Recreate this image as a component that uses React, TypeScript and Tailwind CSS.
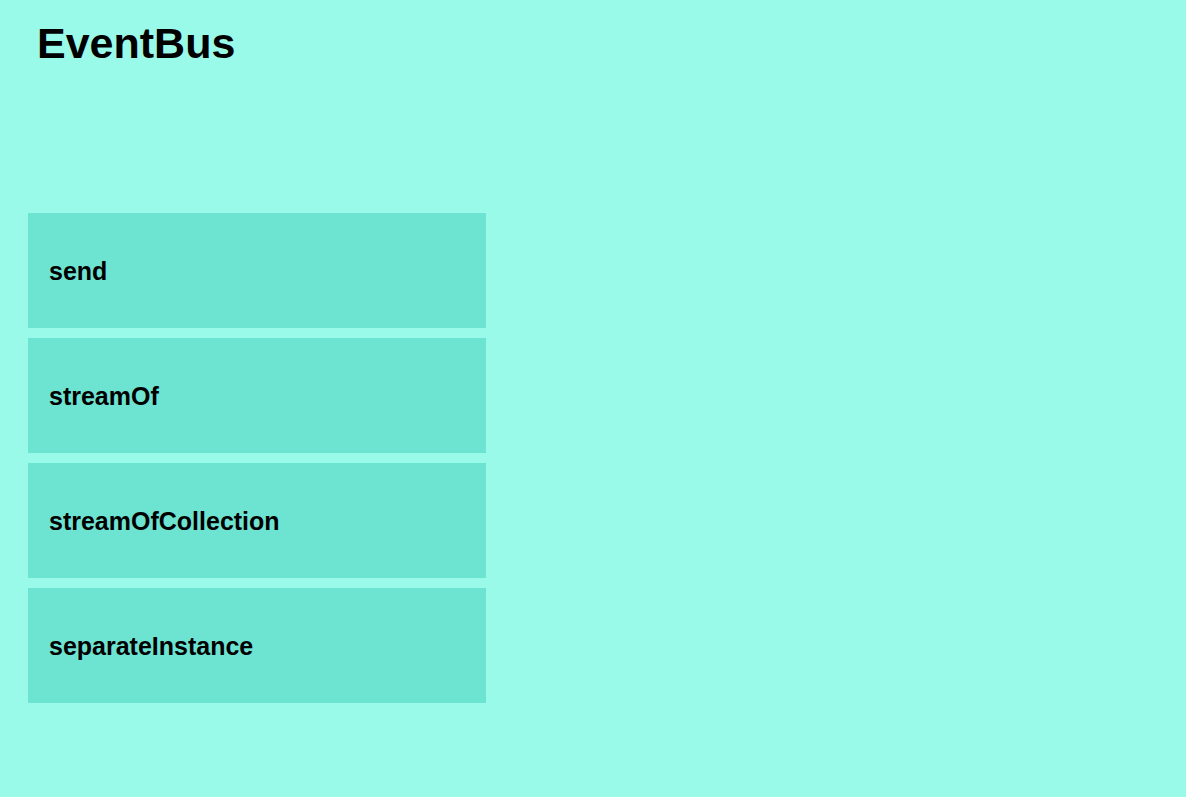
const methods = ["send", "streamOf", "streamOfCollection", "separateInstance"];

const MethodCard: React.FC<{ name: string }> = ({ name }) => {
  return (
    <div className="flex items-center h-[115px] px-[21px] pt-[2px] bg-[#6ce4d1]">
      <p className="text-[25px] font-bold leading-none text-black">{name}</p>
    </div>
  );
};

export default function App() {
  return (
    <div
      className="min-h-screen bg-[#9afaea] text-black"
      style={{ fontFamily: '"Liberation Sans", Arial, sans-serif' }}
    >
      <h1 className="pl-[37px] pt-[22px] text-[43px] font-bold leading-none">EventBus</h1>
      <div className="flex flex-col gap-[10px] w-[458px] ml-[28px] mt-[148px]">
        {methods.map((m) => (
          <MethodCard key={m} name={m} />
        ))}
      </div>
    </div>
  );
}
